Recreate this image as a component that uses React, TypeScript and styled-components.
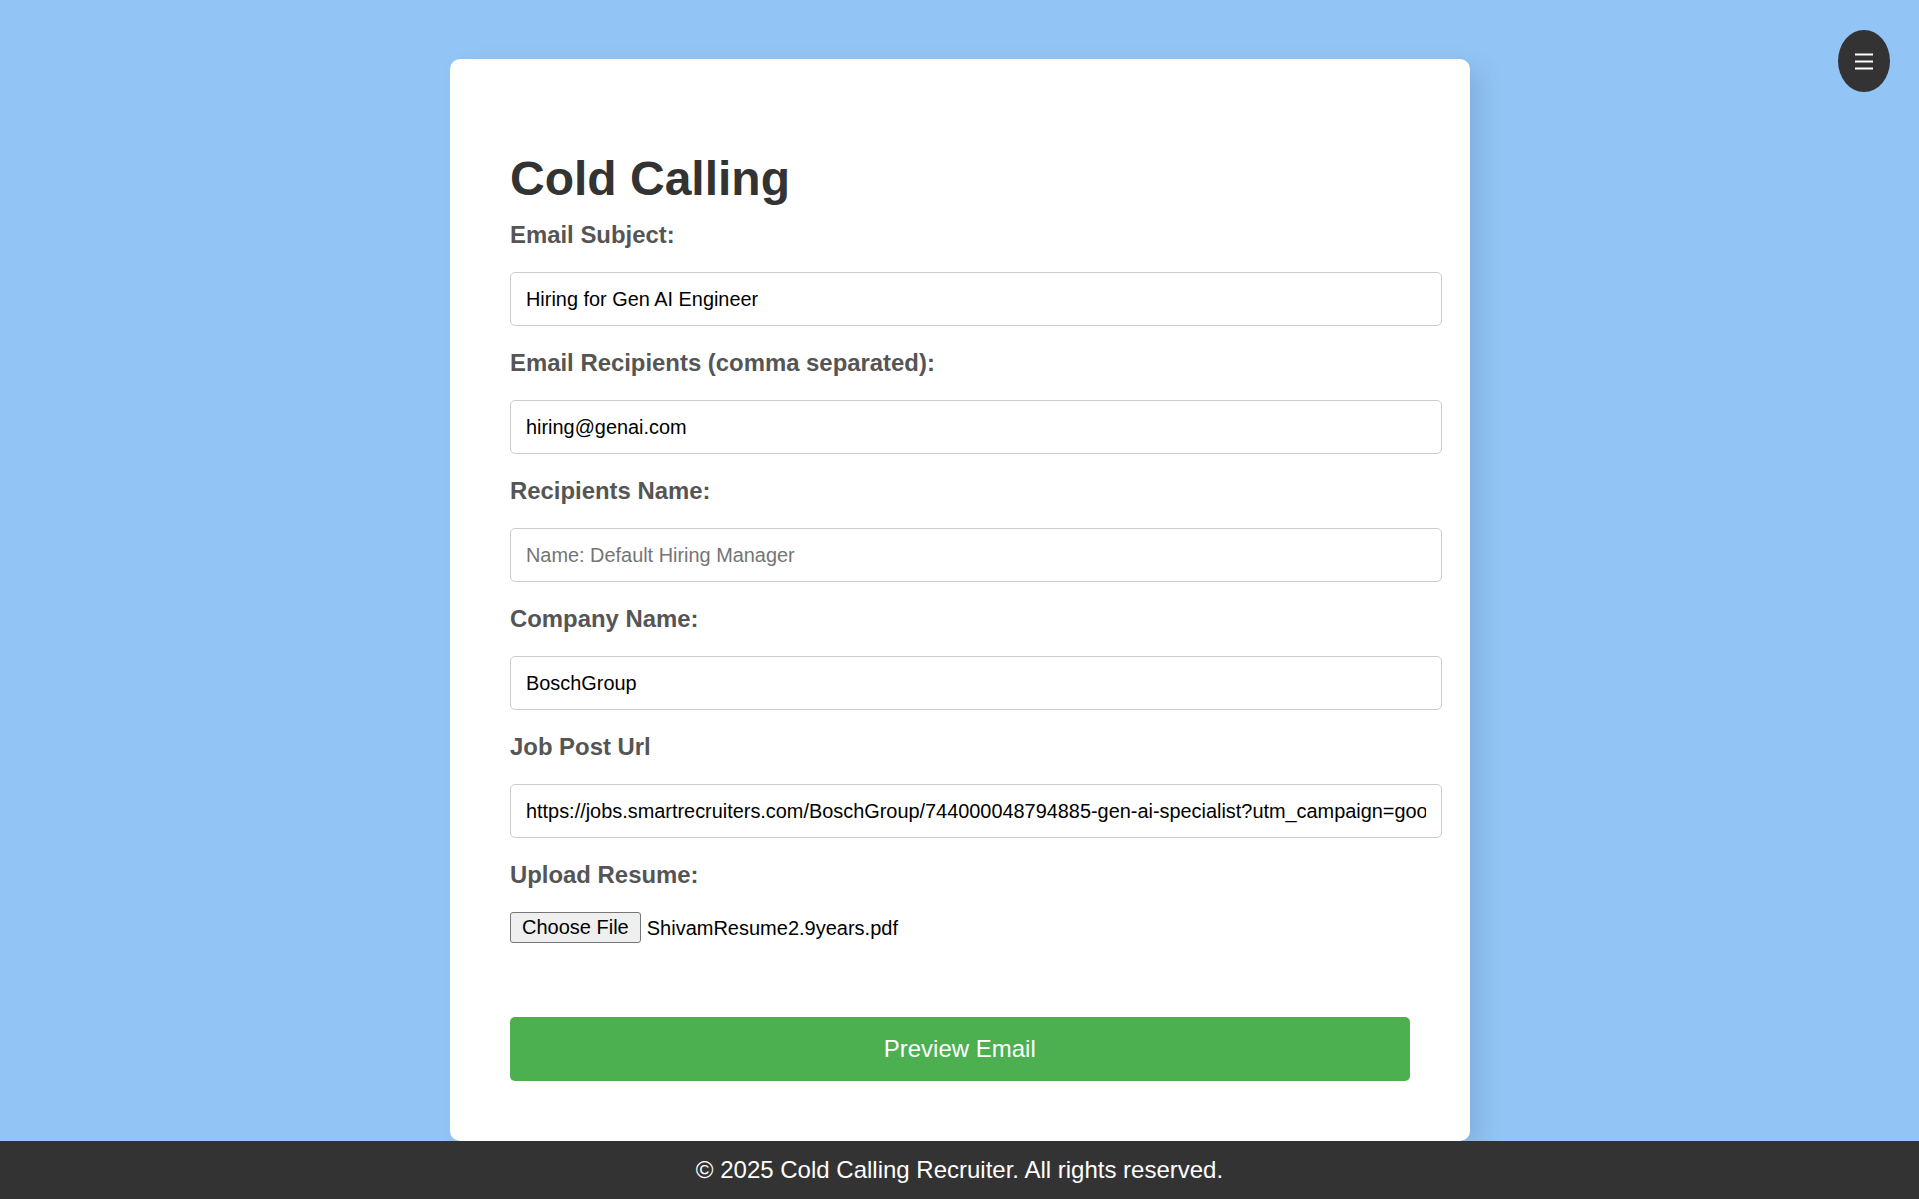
import React from "react";
import styled, { createGlobalStyle } from "styled-components";

const GlobalStyle = createGlobalStyle`
  html, body {
    margin: 0;
    padding: 0;
    overflow: hidden;
  }
  body {
    background: #92c5f5;
    font-family: "Liberation Sans", Arial, sans-serif;
  }
  * { box-sizing: border-box; }
`;

const Page = styled.div`
  min-height: 100vh;
  display: flex;
  flex-direction: column;
`;

const Main = styled.main`
  flex: 1;
  display: flex;
  justify-content: center;
  align-items: flex-start;
  padding-top: 59px;
`;

const Card = styled.div`
  width: 1020px;
  height: 1082px;
  background: #ffffff;
  border-radius: 10px;
  padding: 61px 60px 60px 60.5px;
  box-shadow: 12px 8px 24px rgba(0, 0, 0, 0.1);
  display: flex;
  flex-direction: column;
`;

const Title = styled.h1`
  margin: 31px 0 16px;
  font-size: 48px;
  line-height: 55px;
  font-weight: 700;
  color: #333333;
`;

const Label = styled.label`
  display: block;
  font-size: 23.9px;
  line-height: 26px;
  font-weight: 700;
  color: #555555;
  margin-bottom: 24px;
`;

const TextInput = styled.input`
  display: block;
  box-sizing: content-box;
  width: 100%;
  height: 52px;
  padding: 0 15px;
  margin: 0 0 24px;
  border: 1px solid #cccccc;
  border-radius: 5px;
  font-family: "Liberation Sans", Arial, sans-serif;
  font-size: 19.9px;
  color: #000000;
  background: #ffffff;
  outline: none;
  &::placeholder {
    color: #757575;
  }
`;

const FileRow = styled.div`
  display: flex;
  align-items: center;
  height: 31px;
  margin-bottom: 73.5px;
`;

const FileButton = styled.button`
  height: 31px;
  padding: 0 11px;
  margin-right: 6px;
  border: 1px solid #767676;
  border-radius: 3px;
  background: #efefef;
  font-family: "Liberation Sans", Arial, sans-serif;
  font-size: 20px;
  color: #000000;
`;

const FileName = styled.span`
  font-size: 20px;
  color: #000000;
  position: relative;
  top: 1px;
`;

const PrimaryButton = styled.button`
  width: 100%;
  height: 64px;
  border: none;
  border-radius: 5px;
  background: #4caf50;
  color: #ffffff;
  font-family: "Liberation Sans", Arial, sans-serif;
  font-size: 24px;
  cursor: pointer;
`;

const Footer = styled.footer`
  height: 58px;
  background: #333333;
  color: #ffffff;
  display: flex;
  align-items: center;
  justify-content: center;
  font-size: 24px;
`;

const MenuButton = styled.button`
  position: fixed;
  top: 30px;
  right: 29px;
  width: 52px;
  height: 62px;
  border-radius: 50%;
  border: none;
  background: #333333;
  display: flex;
  align-items: center;
  justify-content: center;
  padding: 0;
  cursor: pointer;
`;

const MenuIcon = () => (
  <svg width="18" height="18" viewBox="0 0 18 18" aria-hidden="true">
    <rect x="0" y="1.5" width="18" height="2" fill="#ffffff" />
    <rect x="0" y="8.5" width="18" height="2" fill="#ffffff" />
    <rect x="0" y="15.5" width="18" height="2" fill="#ffffff" />
  </svg>
);

const fields = [
  { label: "Email Subject:", value: "Hiring for Gen AI Engineer", placeholder: "" },
  { label: "Email Recipients (comma separated):", value: "hiring@genai.com", placeholder: "" },
  { label: "Recipients Name:", value: "", placeholder: "Name: Default Hiring Manager" },
  { label: "Company Name:", value: "BoschGroup", placeholder: "" },
  {
    label: "Job Post Url",
    value:
      "https://jobs.smartrecruiters.com/BoschGroup/744000048794885-gen-ai-specialist?utm_campaign=google_jobs_apply&utm_source=google_jobs_apply&utm_medium=organic",
    placeholder: "",
  },
];

export default function App() {
  return (
    <Page>
      <GlobalStyle />
      <MenuButton aria-label="Menu">
        <MenuIcon />
      </MenuButton>
      <Main>
        <Card>
          <Title>Cold Calling</Title>
          {fields.map((f) => (
            <React.Fragment key={f.label}>
              <Label>{f.label}</Label>
              <TextInput type="text" defaultValue={f.value} placeholder={f.placeholder} />
            </React.Fragment>
          ))}
          <Label>Upload Resume:</Label>
          <FileRow>
            <FileButton type="button">Choose File</FileButton>
            <FileName>ShivamResume2.9years.pdf</FileName>
          </FileRow>
          <PrimaryButton type="button">Preview Email</PrimaryButton>
        </Card>
      </Main>
      <Footer>© 2025 Cold Calling Recruiter. All rights reserved.</Footer>
    </Page>
  );
}
